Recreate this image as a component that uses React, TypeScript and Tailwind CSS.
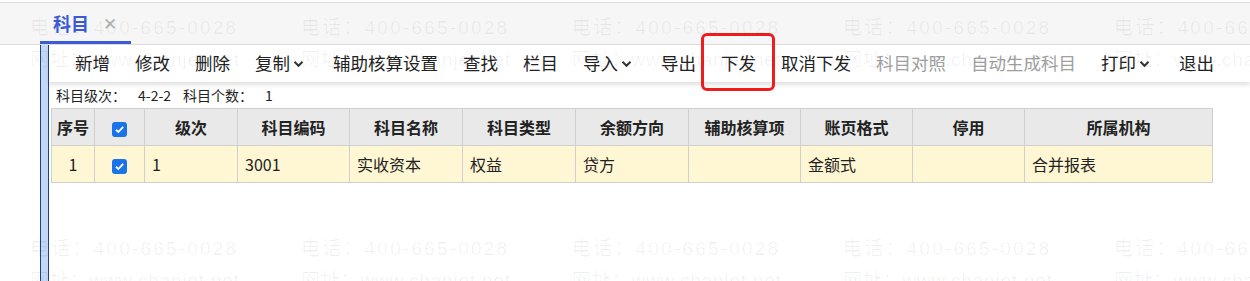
import React from "react";

const tools = [
  { label: "新增" },
  { label: "修改" },
  { label: "删除" },
  { label: "复制", menu: true },
  { label: "辅助核算设置" },
  { label: "查找" },
  { label: "栏目" },
  { label: "导入", menu: true },
  { label: "导出" },
  { label: "下发", marked: true },
  { label: "取消下发" },
  { label: "科目对照", off: true },
  { label: "自动生成科目", off: true },
  { label: "打印", menu: true },
  { label: "退出" },
];

const cols = [
  { title: "序号", w: "w-[43px]" },
  { title: "check", w: "w-[50px]" },
  { title: "级次", w: "w-[93px]" },
  { title: "科目编码", w: "w-[112px]" },
  { title: "科目名称", w: "w-[113px]" },
  { title: "科目类型", w: "w-[113px]" },
  { title: "余额方向", w: "w-[113px]" },
  { title: "辅助核算项", w: "w-[112px]" },
  { title: "账页格式", w: "w-[112px]" },
  { title: "停用", w: "w-[112px]" },
  { title: "所属机构", w: "w-[188px]" },
];

const row = ["1", "check", "1", "3001", "实收资本", "权益", "贷方", "", "金额式", "", "合并报表"];

function Chevron() {
  return (
    <svg width="11" height="8" viewBox="0 0 11 8" className="ml-[3px] mr-[4px]">
      <path d="M1.5 1.8 L5.5 5.8 L9.5 1.8" fill="none" stroke="#333" strokeWidth="2" />
    </svg>
  );
}

function Check() {
  return (
    <span className="inline-flex h-[15px] w-[15px] items-center justify-center rounded-[3px] bg-[#1a73e8] align-middle">
      <svg width="11" height="11" viewBox="0 0 10 10">
        <path d="M1.8 5.2 L4 7.3 L8.3 2.6" fill="none" stroke="#fff" strokeWidth="1.7" />
      </svg>
    </span>
  );
}

function Watermark() {
  const cells = Array.from({ length: 10 });
  return (
    <div
      className="pointer-events-none absolute left-[30px] top-[12px] flex w-[1400px] flex-wrap text-[19px] leading-[32px] text-black/[0.06]"
      style={{ fontFamily: '"Liberation Sans", "Noto Sans CJK SC", sans-serif' }}
    >
      {cells.map((_, i) => (
        <div key={i} className="h-[221px] w-[271px] overflow-hidden whitespace-nowrap">
          <div className="tracking-[2.2px]">电话：400-665-0028</div>
          <div className="tracking-[0.8px]">网址：www.chanjet.net</div>
        </div>
      ))}
    </div>
  );
}

export default function App() {
  return (
    <div
      className="relative h-[281px] w-[1250px] overflow-hidden bg-white text-[#222]"
      style={{ fontFamily: '"Noto Sans CJK SC", "Noto Sans", sans-serif' }}
    >
      <div className="mt-[2px] flex h-[43px] border-t border-b border-[#dcdcdc] bg-[#f6f6f6] pl-[40px]">
        <div className="flex h-full w-[91px] items-center border-b-[3px] border-[#3c5ad6] pl-[13px] pt-[2px]">
          <span className="text-[18px] font-bold text-[#3c5ad6]">科目</span>
          <span className="ml-[14px] text-[17px] text-[#b0b0b0]">✕</span>
        </div>
      </div>

      <div className="ml-[40px] flex">
        <div className="h-[240px] w-[9px] shrink-0 border-x border-[#1f3f8f] bg-[#c3d8f5]" />
        <div className="flex-1">
          <div className="flex h-[37px] items-center gap-[25px] bg-white pl-[26px] text-[17.5px] shadow-[0_3px_4px_rgba(0,0,0,0.12)]">
            {tools.map((t) => (
              <div
                key={t.label}
                className={`relative flex items-center whitespace-nowrap ${t.off ? "text-[#a0a0a0]" : "text-[#222]"}`}
              >
                {t.label}
                {t.menu && <Chevron />}
                {t.marked && (
                  <div className="absolute left-[-20px] top-[-17px] h-[58px] w-[74px] rounded-[6px] border-[3px] border-[#ee1c1c]" />
                )}
              </div>
            ))}
          </div>

          <div className="flex h-[26px] items-end pb-[2px] pl-[7px] text-[14px] text-[#222]">
            <span>科目级次：</span>
            <span className="ml-[12px]">4-2-2</span>
            <span className="ml-[12px]">科目个数：</span>
            <span className="ml-[12px]">1</span>
          </div>

          <table className="ml-[2px] border-collapse text-[16px]">
            <thead>
              <tr className="h-[37px] bg-[#e9e9e9]">
                {cols.map((c) => (
                  <th key={c.title} className={`${c.w} border border-[#cfcfcf] p-0 text-center font-bold`}>
                    {c.title === "check" ? <Check /> : c.title}
                  </th>
                ))}
              </tr>
            </thead>
            <tbody>
              <tr className="h-[37px] bg-[#fff6d3]">
                {row.map((v, i) => (
                  <td
                    key={i}
                    className={`border border-[#cfcfcf] px-[7px] py-0 ${i < 2 ? "text-center" : "text-left"}`}
                  >
                    {v === "check" ? <Check /> : v}
                  </td>
                ))}
              </tr>
            </tbody>
          </table>
        </div>
      </div>

      <Watermark />
    </div>
  );
}
